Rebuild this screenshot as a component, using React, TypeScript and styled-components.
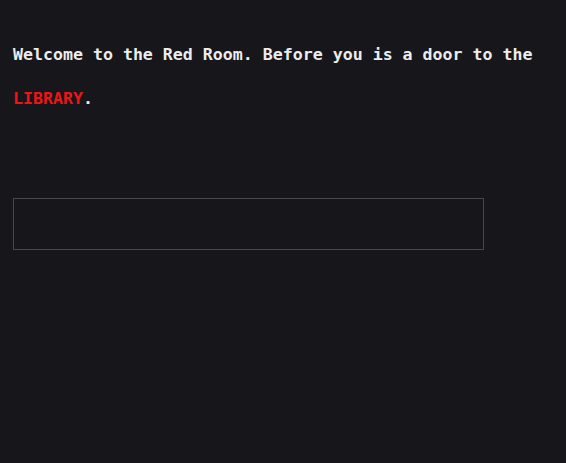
import React from 'react';
import styled, {createGlobalStyle} from 'styled-components';

const GlobalStyle = createGlobalStyle`
	html, body {
		margin: 0;
		padding: 0;
		background-color: #17161a;
	}
`;

const Screen = styled.div`
	min-height: 463px;
	padding: 33px 13px 0;
	box-sizing: border-box;
	background-color: #17161a;
	font-family: 'DejaVu Sans Mono', 'Liberation Mono', monospace;
	font-weight: bold;
	color: #ececec;
`;

const Story = styled.p`
	margin: 0;
	font-size: 16.6px;
	line-height: 44px;
`;

const Place = styled.span`
	color: #f01414;
`;

const Prompt = styled.input`
	display: block;
	margin-top: 77px;
	width: 471px;
	height: 52px;
	box-sizing: border-box;
	background: transparent;
	border: 1px solid #48474b;
	outline: none;
	padding: 0 10px;
	font-family: inherit;
	font-size: 16.6px;
	color: #ececec;
`;

const App: React.FC = () => {
	return (
		<>
			<GlobalStyle />
			<Screen>
				<Story>
					Welcome to the Red Room. Before you is a door to the{' '}
					<Place>LIBRARY</Place>.
				</Story>
				<Prompt type='text' />
			</Screen>
		</>
	);
};

export default App;
